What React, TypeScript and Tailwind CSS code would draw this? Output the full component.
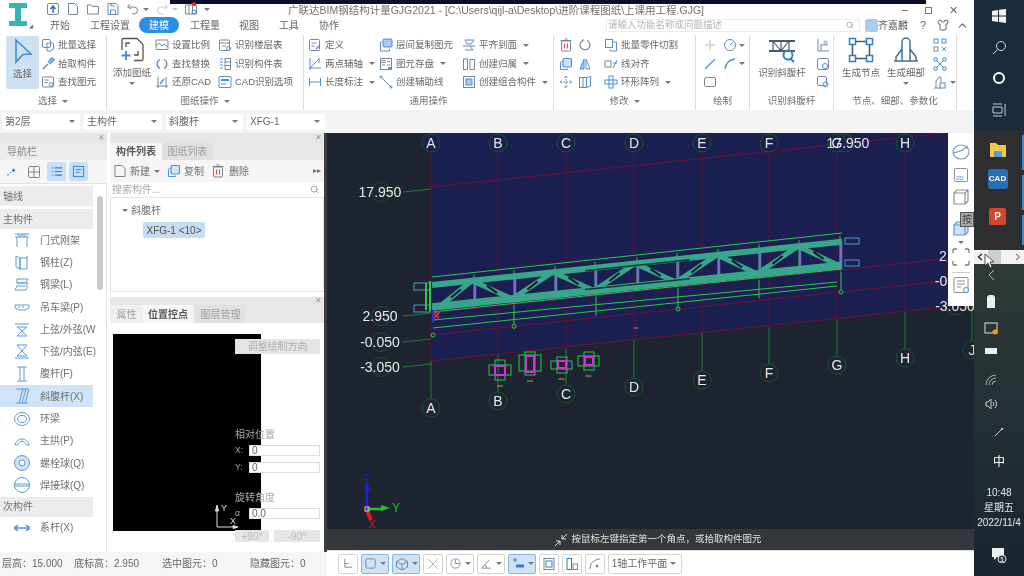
import type { ReactNode } from "react";
import { ChevronUp, Search, Shirt } from "lucide-react";

const G = "#7a8794";
const B = "#4a90d9";

const Caret = ({ className = "" }: { className?: string }) => (
  <span
    className={`inline-block h-0 w-0 border-x-[3px] border-t-[3px] border-x-transparent border-t-[#777] ${className}`}
  />
);

const Svg = ({ size = 14, box = 14, children }: { size?: number; box?: number; children: ReactNode }) => (
  <svg width={size} height={size} viewBox={`0 0 ${box} ${box}`} fill="none" stroke={G} strokeWidth="1" className="shrink-0">
    {children}
  </svg>
);

// small ribbon glyphs
const icons: Record<string, ReactNode> = {
  batch: (
    <>
      <rect x="1.5" y="1.5" width="8" height="8" rx="1.5" />
      <path d="M6 5h5.5a1 1 0 0 1 1 1v5l-3 2H6z" stroke={B} />
    </>
  ),
  pick: (
    <>
      <path d="M2 12l5-5" stroke={G} strokeWidth="1.5" />
      <path d="M7 4l3 3M9 3l2-2 2 2-2 2z" stroke={B} strokeWidth="1.5" />
    </>
  ),
  find: (
    <>
      <rect x="1.5" y="2" width="11" height="10" rx="1" />
      <path d="M3.5 5h4M3.5 7.5h3" />
      <circle cx="10" cy="9.5" r="1.8" stroke={B} />
    </>
  ),
  scale: (
    <>
      <rect x="1" y="2" width="12" height="9.5" rx="1" />
      <path d="M1 8l3-3 3 3 2-2 4 3" stroke={B} />
    </>
  ),
  replace: (
    <>
      <path d="M5 2.5a5 5 0 0 0 0 9" stroke={B} strokeWidth="1.3" />
      <path d="M9 2.5a5 5 0 0 1 0 9" stroke={G} strokeWidth="1.3" />
    </>
  ),
  restore: (
    <>
      <path d="M1 11h12M3 2v11M11 2v11" />
      <path d="M5 9l4-5" stroke={B} strokeWidth="1.5" />
    </>
  ),
  floor: (
    <>
      <rect x="1.5" y="2" width="10" height="10.5" rx="1" />
      <path d="M1.5 5h10M4 8h4" />
      <circle cx="10.5" cy="10.5" r="2" stroke={B} />
    </>
  ),
  table: (
    <>
      <path d="M2 2h3M2 5h3M2 8h3M2 11h3" stroke={B} />
      <rect x="7" y="1.5" width="5.5" height="11" />
      <path d="M7 5h5.5M7 8.5h5.5" />
    </>
  ),
  cad: (
    <>
      <rect x="1" y="1.5" width="12" height="11" rx="1" stroke={B} />
      <path d="M3 5h8" stroke={B} strokeWidth="2" />
      <path d="M3 9h5" />
    </>
  ),
  define: (
    <>
      <rect x="1.5" y="1.5" width="10" height="11" rx="1" />
      <path d="M3.5 5h5M3.5 8h3" />
      <path d="M8 11l4-4" stroke={B} strokeWidth="1.4" />
    </>
  ),
  twoPoint: (
    <>
      <path d="M2 1v12M1 11h12M2 11l9-9" stroke={B} />
      <path d="M11 1v5" />
    </>
  ),
  length: <path d="M1.5 3v8M12.5 3v8M1.5 7h11" stroke={B} />,
  copyFloor: (
    <>
      <rect x="4" y="1" width="9" height="8" rx="1" fill="#a9c9ee" stroke={B} />
      <path d="M3 4H1.5v9h9v-2" />
    </>
  ),
  save: (
    <>
      <rect x="1.5" y="1.5" width="11" height="11" />
      <rect x="3" y="3.5" width="3" height="2" />
      <path d="M8 4.5h3M3 8h3M8 8h3" />
      <path d="M9 11h3" stroke={B} strokeWidth="2" />
    </>
  ),
  guide: (
    <>
      <path d="M2 2l10 10" />
      <circle cx="2" cy="2" r="1" stroke={B} />
      <circle cx="12" cy="12" r="1" stroke={B} />
    </>
  ),
  level: (
    <>
      <path d="M3 2h9L9 6H5z" stroke={B} />
      <path d="M1 8h12M3 12h8l-3-4" />
    </>
  ),
  owner: (
    <>
      <rect x="1.5" y="2" width="4" height="10.5" stroke={B} />
      <path d="M8 2.5h4.5V12.5H8z" />
    </>
  ),
  group: (
    <>
      <rect x="1.5" y="1.5" width="11" height="11" />
      <rect x="4" y="4" width="6" height="6" stroke={B} fill="#a9c9ee" />
    </>
  ),
  trash: (
    <>
      <rect x="2.5" y="3" width="9" height="10" rx="1" />
      <path d="M1.5 2.5h11M5.5 1h3" />
      <path d="M5.5 5.5v5M8.5 5.5v5" stroke="#d9534f" strokeWidth="1.2" />
    </>
  ),
  rotate: <path d="M9 2.2A5 5 0 1 1 5 2.2M5 1v2.5" strokeWidth="1.2" />,
  copy: (
    <>
      <rect x="4" y="1.5" width="8.5" height="8.5" rx="1.5" stroke={B} strokeWidth="1.2" fill="#cfe2f7" />
      <path d="M3.5 4.5H2.5a1 1 0 0 0-1 1v7h7v-1" stroke={B} />
    </>
  ),
  mirror: (
    <>
      <path d="M6 2L2 12h4z" fill="#a9c9ee" stroke={B} />
      <path d="M8 2l4 10H8z" />
    </>
  ),
  move: <path d="M7 1v12M1 7h12M5.5 2.5L7 1l1.5 1.5M5.5 11.5L7 13l1.5-1.5M2.5 5.5L1 7l1.5 1.5M11.5 5.5L13 7l-1.5 1.5" stroke={B} strokeDasharray="2 1" />,
  spin: (
    <>
      <rect x="1.5" y="2.5" width="7" height="10" />
      <path d="M8.5 2.5l4-1V11l-4 1.5M5 2.5V12.5" stroke={B} />
    </>
  ),
  cut: (
    <>
      <rect x="1.5" y="1.5" width="7" height="8" stroke={B} />
      <path d="M9 4h3.5v9H6v-2" />
    </>
  ),
  align: (
    <>
      <rect x="1" y="4" width="6" height="6" />
      <path d="M9 11l4-8M9 6h4" stroke={B} />
    </>
  ),
  ring: (
    <>
      <rect x="5" y="1" width="4" height="4" stroke={B} />
      <rect x="1" y="5" width="4" height="4" stroke={B} />
      <rect x="9" y="5" width="4" height="4" stroke={B} />
      <rect x="5" y="9" width="4" height="4" stroke={B} />
    </>
  ),
  cross: <path d="M7 2v10M2 7h10" stroke="#b8c0c8" />,
  dial: (
    <>
      <circle cx="7" cy="7" r="5.5" />
      <path d="M7 7l3-3" stroke={B} />
    </>
  ),
  line: <path d="M2 12L12 2" stroke={B} strokeWidth="1.3" />,
  arc: <path d="M2 12C3 6 7 2.5 12 2" stroke={B} strokeWidth="1.3" />,
  rect: <rect x="1.5" y="2.5" width="11" height="9" rx="1.5" stroke={G} />,
  mini1: (
    <>
      <path d="M2 1v12M2 13h11M5 6v7M5 7h7" stroke={G} />
      <circle cx="9.5" cy="4.5" r="1.5" stroke={B} />
    </>
  ),
  mini2: (
    <>
      <rect x="1.5" y="1.5" width="11" height="11" rx="1.5" />
      <circle cx="9" cy="9" r="2.5" stroke={B} />
    </>
  ),
  mini3: (
    <>
      <rect x="1.5" y="1.5" width="9" height="9" rx="1.5" />
      <circle cx="9.5" cy="9.5" r="2.5" stroke={B} />
    </>
  ),
  node1: (
    <>
      <rect x="1" y="1" width="4" height="4" stroke={B} />
      <rect x="9" y="1" width="4" height="4" stroke={B} />
      <rect x="1" y="9" width="4" height="4" />
      <path d="M9 9l4 4M9 13l4-4" stroke={B} />
    </>
  ),
  node2: <path d="M1 1h3v3H1zM10 1h3v3h-3zM1 10h3v3H1zM10 10h3v3h-3zM4 4l6 6M10 4l-6 6" stroke={B} />,
  node3: (
    <>
      <path d="M3 13V6l3-4 2 0v5M8 13H1" />
      <rect x="7" y="8" width="5" height="5" stroke={B} />
    </>
  ),
};

const I = ({ n }: { n: string }) => <Svg>{icons[n]}</Svg>;

const Tool = ({ icon, text, caret }: { icon: string; text: string; caret?: boolean }) => (
  <div className="flex h-[18.5px] items-center gap-[3px] whitespace-nowrap">
    <I n={icon} />
    <span>{text}</span>
    {caret && <Caret className="ml-[3px]" />}
  </div>
);

const Col = ({ w, ml = 0, children }: { w: number; ml?: number; children: ReactNode }) => (
  <div className="flex flex-col" style={{ width: w, marginLeft: ml }}>
    {children}
  </div>
);

const Group = ({ w, label, children, noCaret }: { w: number; label: string; children: ReactNode; noCaret?: boolean }) => (
  <div className="flex h-full shrink-0 flex-col border-r border-[#dcdcdc]" style={{ width: w }}>
    <div className="flex h-[59px] pt-px">{children}</div>
    <div className="flex h-[15px] items-center justify-center gap-[5px] text-[#707070]">
      {label}
      {!noCaret && <Caret />}
    </div>
  </div>
);

const BigTool = ({ w, ml, text, caret, children }: { w: number; ml: number; text: string; caret?: boolean; children: ReactNode }) => (
  <div className="flex shrink-0 flex-col items-center" style={{ width: w, marginLeft: ml }}>
    <div className="flex h-[28px] items-center justify-center">{children}</div>
    <span className="mt-[2px] whitespace-nowrap">{text}</span>
    {caret && <Caret className="mt-[2px]" />}
  </div>
);

const Ribbon = () => (
  <div className="flex h-[77px] shrink-0 bg-white pt-[2px] text-[9.5px] text-[#666]">
    <Group w={107} label="选择">
      <div className="ml-[6px] flex h-[53px] w-[33px] flex-col items-center rounded-[2px] bg-[#cfe0f2] pt-px">
        <svg width="24" height="28" viewBox="0 0 24 28" fill="none" stroke="#3f87d0" strokeWidth="1.5">
          <path d="M5 3l15 14-8 .5L5 25z" />
        </svg>
        <span className="mt-[2px]">选择</span>
      </div>
      <Col w={60} ml={2}>
        <Tool icon="batch" text="批量选择" />
        <Tool icon="pick" text="拾取构件" />
        <Tool icon="find" text="查找图元" />
      </Col>
    </Group>
    <Group w={197} label="图纸操作">
      <BigTool w={42} ml={4} text="添加图纸" caret>
        <svg width="26" height="26" viewBox="0 0 26 26" fill="none" stroke="#555" strokeWidth="1.3">
          <path d="M3 13V3a1.5 1.5 0 0 1 1.5-1.5H18l6 6V22a1.5 1.5 0 0 1-1.5 1.5H15" />
          <path d="M7 10V6h4M19 14v4h-4" />
          <path d="M7 14v9M2.5 18.5h9" stroke="#3f87d0" strokeWidth="1.8" />
        </svg>
      </BigTool>
      <Col w={63} ml={2}>
        <Tool icon="scale" text="设置比例" />
        <Tool icon="replace" text="查找替换" />
        <Tool icon="restore" text="还原CAD" />
      </Col>
      <Col w={80}>
        <Tool icon="floor" text="识别楼层表" />
        <Tool icon="table" text="识别构件表" />
        <Tool icon="cad" text="CAD识别选项" />
      </Col>
    </Group>
    <Group w={250} label="通用操作" noCaret>
      <Col w={71} ml={4}>
        <Tool icon="define" text="定义" />
        <Tool icon="twoPoint" text="两点辅轴" caret />
        <Tool icon="length" text="长度标注" caret />
      </Col>
      <Col w={83}>
        <Tool icon="copyFloor" text="层间复制图元" />
        <Tool icon="save" text="图元存盘" caret />
        <Tool icon="guide" text="创建辅助线" />
      </Col>
      <Col w={88}>
        <Tool icon="level" text="平齐到面" caret />
        <Tool icon="owner" text="创建归属" caret />
        <Tool icon="group" text="创建组合构件" caret />
      </Col>
    </Group>
    <Group w={142} label="修改">
      <Col w={44} ml={5}>
        <div className="flex h-[18.5px] items-center gap-[5px]">
          <I n="trash" />
          <I n="rotate" />
        </div>
        <div className="flex h-[18.5px] items-center gap-[5px]">
          <I n="copy" />
          <I n="mirror" />
        </div>
        <div className="flex h-[18.5px] items-center gap-[5px]">
          <I n="move" />
          <I n="spin" />
        </div>
      </Col>
      <Col w={85} ml={1}>
        <Tool icon="cut" text="批量零件切割" />
        <Tool icon="align" text="线对齐" />
        <Tool icon="ring" text="环形阵列" caret />
      </Col>
    </Group>
    <Group w={54} label="绘制" noCaret>
      <div className="ml-[7px] flex flex-col">
        <div className="flex h-[18.5px] items-center gap-[6px]">
          <I n="cross" />
          <I n="dial" />
          <Caret className="-ml-[4px]" />
        </div>
        <div className="flex h-[18.5px] items-center gap-[6px]">
          <I n="line" />
          <I n="arc" />
          <Caret className="-ml-[4px]" />
        </div>
        <div className="flex h-[18.5px] items-center">
          <I n="rect" />
        </div>
      </div>
    </Group>
    <Group w={84} label="识别斜腹杆" noCaret>
      <BigTool w={56} ml={4} text="识别斜腹杆">
        <svg width="28" height="26" viewBox="0 0 28 26" fill="none" stroke="#4b5a6a" strokeWidth="1.2">
          <path d="M1 4h26M1 14h26" strokeWidth="1.8" />
          <path d="M5 4v10M13 4v10M21 4v10M5 4l8 10M13 14l8-10" />
          <circle cx="20" cy="18" r="4.5" stroke="#2f7fd0" strokeWidth="2" />
          <path d="M23 22l3 3" stroke="#2f7fd0" strokeWidth="2" />
        </svg>
      </BigTool>
      <Col w={16} ml={6}>
        <div className="flex h-[18.5px] items-center"><I n="mini1" /></div>
        <div className="flex h-[18.5px] items-center"><I n="mini2" /></div>
        <div className="flex h-[18.5px] items-center"><I n="mini3" /></div>
      </Col>
    </Group>
    <Group w={123} label="节点、细部、参数化" noCaret>
      <BigTool w={42} ml={6} text="生成节点">
        <svg width="26" height="26" viewBox="0 0 26 26" fill="none" stroke="#2f7fd0" strokeWidth="1.5">
          <rect x="1.5" y="1.5" width="6" height="6" />
          <rect x="18.5" y="1.5" width="6" height="6" />
          <rect x="1.5" y="18.5" width="6" height="6" />
          <rect x="18.5" y="18.5" width="6" height="6" />
          <path d="M7.5 4.5h11M7.5 21.5h11M4.5 7.5v11M21.5 7.5v11" stroke="#4b5a6a" />
        </svg>
      </BigTool>
      <BigTool w={44} ml={2} text="生成细部" caret>
        <svg width="26" height="26" viewBox="0 0 26 26" fill="none" stroke="#3f6f9f" strokeWidth="1.5">
          <path d="M9 24V5a4 4 0 0 1 8 0v19M1 24h24M9 12l-6 8v4M17 12l6 8v4" />
        </svg>
      </BigTool>
      <Col w={22} ml={5}>
        <div className="flex h-[18.5px] items-center"><I n="node1" /></div>
        <div className="flex h-[18.5px] items-center"><I n="node2" /></div>
        <div className="flex h-[18.5px] items-center gap-[3px]">
          <I n="node3" />
          <Caret />
        </div>
      </Col>
    </Group>
  </div>
);

const QuickBar = () => (
  <div className="flex shrink-0 items-center gap-[6px]">
    <Svg>
      <rect x="1.5" y="1.5" width="11" height="11" rx="1.5" />
      <path d="M7 11V5M4.5 7L7 4l2.500 3" stroke="#2f6fc0" strokeWidth="1.5" />
    </Svg>
    <Svg>
      <path d="M2.5 1.5h6l3 3v8h-9z" />
    </Svg>
    <Svg>
      <path d="M1.5 12V3h4l1 1.5h6V12z" />
    </Svg>
    <Svg>
      <path d="M2 1.5h8l2 2v9H2z" />
      <path d="M4.5 12V8h5v4M5 1.5V4h4" stroke={B} />
    </Svg>
    <div className="flex items-center gap-[3px]">
      <Svg>
        <path d="M4 2L1.500 5 5 7M2 5h6a3.500 3.500 0 0 1 0 7H6" />
      </Svg>
      <Caret />
    </div>
    <div className="flex items-center gap-[3px] opacity-40">
      <Svg>
        <path d="M10 2l2.500 3L9 7M12 5H6a3.500 3.500 0 0 0 0 7h2" />
      </Svg>
      <Caret />
    </div>
    <div className="relative">
      <Svg>
        <path d="M1.5 3h11v9h-11zM5 3v9M8.500 3v9" />
        <circle cx="10" cy="10" r="2" stroke={B} />
      </Svg>
      <span className="absolute top-0 right-[2px] size-[4px] rounded-full bg-[#e02020]" />
    </div>
    <Caret />
  </div>
);

const Header = () => (
  <div className="relative h-[33px] shrink-0 bg-white text-[#666]">
    <div className="absolute top-0 left-[170px] h-[4px] w-[756px] bg-[#0b0d2c]" />
    <div className="flex h-[33px]">
      <div className="relative w-[46px] shrink-0">
        <svg width="24" height="24" viewBox="0 0 24 24" className="mt-[2px] ml-[6px]">
          <path d="M3 1h18v5h-6v13h6v5H3v-5h6V6H3z" fill="#36b5b5" />
        </svg>
        <Caret className="absolute right-[11px] bottom-[4px] rotate-[-45deg]" />
      </div>
      <div className="flex flex-1 flex-col">
        <div className="flex h-[17px] items-center pt-px">
          <QuickBar />
          <span className="ml-[78px] w-[612px] shrink-0 truncate pt-[3px] text-[10.5px] text-[#707070]">
            广联达BIM钢结构计量GJG2021 - [C:\Users\qijl-a\Desktop\进阶课程图纸\上课用工程.GJG]
          </span>
          <div className="flex w-[66px] shrink-0 items-center justify-between pt-[2px] pl-[2px] pr-[8px] text-[#666]">
            <span className="h-px w-[6px] bg-[#777]" />
            <span className="size-[7px] border border-[#777]" />
            <span className="text-[11px] leading-none">✕</span>
          </div>
        </div>
        <div className="flex h-[16px] items-center text-[10px]">
          <span className="ml-[4px] w-[40px]">开始</span>
          <span className="w-[49px]">工程设置</span>
          <span className="flex h-[16px] w-[40px] items-center justify-center rounded-full bg-[#2a8fe8] text-white">建模</span>
          <span className="ml-[11px] w-[49px]">工程量</span>
          <span className="w-[40px]">视图</span>
          <span className="w-[40px]">工具</span>
          <span className="w-[287px]">协作</span>
          <div className="flex h-[13px] w-[254px] items-center justify-between border border-[#ececec] pr-[5px] pl-px text-[9.5px] text-[#b5b5b5]">
            请输入功能名称或问题描述
            <Search size={8} color="#888" />
          </div>
          <div className="ml-[5px] size-[13px] rounded-[2px] bg-[#a9cdf2]" />
          <span className="w-[42px] text-[#555]">齐嘉麟</span>
          <span className="w-[17px] text-[11px]">?</span>
          <Shirt size={12} color="#666" />
          <ChevronUp size={13} color="#666" className="ml-[7px]" />
        </div>
      </div>
    </div>
  </div>
);

const Combo = ({ w, text }: { w: number; text: string }) => (
  <div className="flex h-[16px] items-center justify-between rounded-[2px] bg-white pr-[5px] pl-[3px] text-[#666]" style={{ width: w }}>
    {text}
    <Caret />
  </div>
);

const navIcons: Record<string, ReactNode> = {
  frame: <path d="M2 3h14M2 6h14M4 6v10M14 6v10M5 3l2 3 2-3 2 3 2-3" />,
  column: <path d="M3 3l4 2v11l-4-2zM7 5h7v11H7zM14 3v2" />,
  beam: <path d="M4 3h11l-2 4H4zM4 7h11l-2 3H4l-2 4h11l2-4" />,
  crane: <path d="M2 7h14v3l-4 2H6L2 10zM5 9h2M9 9h2" />,
  top: <path d="M2 4h14M4 7h10L9 11l5 5H4l5-5z" />,
  bottom: <path d="M4 2h10L9 8l5 5H4l5-5zM2 15h14" />,
  web: <path d="M4 2h10M4 16h10M7 2v14M11 2v14" />,
  slant: <path d="M3 2h12M3 16h12M6 16L10 2M9 16l4-14M12 16l4-14" />,
  ring: (
    <>
      <ellipse cx="9" cy="9" rx="7.5" ry="6.5" />
      <ellipse cx="9" cy="9" rx="4.5" ry="3.5" />
    </>
  ),
  arch: <path d="M2 13c2-8 12-8 14 0h-2.5c-2-5-7-5-9 0z" />,
  bolt: (
    <>
      <circle cx="9" cy="9" r="7.5" fill="#cfe2f7" />
      <circle cx="9" cy="9" r="3" fill="#fff" />
    </>
  ),
  weld: (
    <>
      <circle cx="9" cy="9" r="7.5" />
      <path d="M1.5 8h15M1.5 10h15" />
    </>
  ),
  tie: <path d="M2 9h14M2 7v4M16 7v4M5 6l-3 3 3 3M13 6l3 3-3 3" strokeWidth="1.5" />,
};

const navItems: [string, string][] = [
  ["frame", "门式刚架"],
  ["column", "钢柱(Z)"],
  ["beam", "钢梁(L)"],
  ["crane", "吊车梁(P)"],
  ["top", "上弦/外弦(W"],
  ["bottom", "下弦/内弦(E)"],
  ["web", "腹杆(F)"],
  ["slant", "斜腹杆(X)"],
  ["ring", "环梁"],
  ["arch", "主拱(P)"],
  ["bolt", "螺栓球(Q)"],
  ["weld", "焊接球(Q)"],
];

const NavRow = ({ icon, text, active }: { icon: string; text: string; active?: boolean }) => (
  <div className={`flex h-[22.3px] shrink-0 items-center pl-[13px] ${active ? "bg-[#cfe4f8]" : ""}`}>
    <svg width="18" height="18" viewBox="0 0 18 18" fill="none" stroke="#5b9bd5" strokeWidth="1" className="shrink-0">
      {navIcons[icon]}
    </svg>
    <span className="ml-[9px] whitespace-nowrap">{text}</span>
  </div>
);

const SectionRow = ({ text }: { text: string }) => (
  <div className="flex h-[20px] shrink-0 items-center bg-[#ececec] pl-[3px]">{text}</div>
);

const CloseStrip = ({ h = 10 }: { h?: number }) => (
  <div className="flex shrink-0 items-center justify-end bg-[#e6e6e6] pr-[2px] text-[8px] leading-none text-[#999]" style={{ height: h }}>
    ✕
  </div>
);

const NavPanel = () => (
  <div className="flex h-full w-[107px] shrink-0 flex-col overflow-hidden bg-[#f5f5f5] text-[10px] text-[#707070]">
    <CloseStrip />
    <div className="flex h-[17px] shrink-0 items-center bg-[#ececec] pl-[7px] text-[#888]">导航栏</div>
    <div className="flex h-[23px] shrink-0 items-center pl-[5px]">
      <Svg size={12}>
        <path d="M3 11l1-1M6 8l1-1M10 3v4M8 5h4" stroke="#2f7fd0" strokeWidth="1.5" />
      </Svg>
      <span className="ml-[10px]">
        <Svg size={14}>
          <rect x="1.5" y="1.5" width="11" height="11" rx="1" />
          <path d="M7 1.5v11M1.5 7h11" />
        </Svg>
      </span>
      <div className="ml-[6px] flex size-[19px] items-center justify-center rounded-[2px] bg-[#c7dff6]">
        <Svg size={13}>
          <path d="M2 3h1M5 3h8M2 7h1M5 7h8M2 11h1M5 11h8" stroke="#2f7fd0" strokeWidth="1.3" />
        </Svg>
      </div>
      <div className="ml-[3px] flex size-[19px] items-center justify-center rounded-[2px] bg-[#c7dff6]">
        <Svg size={13}>
          <rect x="1.5" y="1.5" width="11" height="11" stroke="#2f7fd0" />
          <path d="M4 5h6M4 8h4" stroke="#2f7fd0" />
        </Svg>
      </div>
    </div>
    <div className="relative flex flex-1 flex-col overflow-hidden border-r border-t border-[#e2e2e2] bg-white pr-[13px] pt-[2px]">
      <SectionRow text="轴线" />
      <div className="h-[3px] shrink-0" />
      <SectionRow text="主构件" />
      {navItems.map(([icon, text]) => (
        <NavRow key={text} icon={icon} text={text} active={icon === "slant"} />
      ))}
      <SectionRow text="次构件" />
      <NavRow icon="tie" text="系杆(X)" />
      <div className="absolute top-[12px] right-[3px] h-[94px] w-[6px] rounded-full bg-[#c9c9c9]" />
    </div>
  </div>
);

const MemberPanel = () => (
  <div className="flex h-[159px] shrink-0 flex-col bg-[#f5f5f5] text-[10px] text-[#707070]">
    <CloseStrip />
    <div className="flex h-[17px] shrink-0 bg-[#e8e8e8]">
      <span className="flex w-[52px] items-center justify-center bg-[#f7f7f7] font-bold text-[#555]">构件列表</span>
      <span className="flex w-[51px] items-center justify-center bg-[#e0e0e0] text-[#a0a0a0]">图纸列表</span>
    </div>
    <div className="flex h-[22px] shrink-0 items-center pl-[3px]">
      <Svg size={14}>
        <path d="M2 1.5h7l3 3v8H2z" />
      </Svg>
      <span className="ml-[3px] w-[24px]">新建</span>
      <Caret className="mr-[7px]" />
      <I n="copy" />
      <span className="ml-[3px] w-[27px]">复制</span>
      <I n="trash" />
      <span className="ml-[4px] flex-1">删除</span>
      <span className="pr-[3px] text-[8px]">▸▸</span>
    </div>
    <div className="flex h-[15px] shrink-0 items-center justify-between bg-white pr-[5px] pl-[2px] text-[#aaa]">
      搜索构件...
      <Search size={9} color="#888" />
    </div>
    <div className="flex-1 border border-[#e4e4e4] bg-white pt-[4px] pl-[11px]">
      <div className="flex h-[16px] items-center gap-[3px]">
        <Caret />
        斜腹杆
      </div>
      <div className="mt-[4px] ml-[21px] flex h-[16px] w-[62px] items-center justify-center rounded-[2px] bg-[#c5dcf2] text-[#555]">
        XFG-1 &lt;10&gt;
      </div>
    </div>
  </div>
);

const Field = ({ label, value }: { label: string; value: string }) => (
  <div className="flex h-[11px] items-center">
    <span className="w-[14px] text-[8.5px] text-[#aaa]">{label}</span>
    <div className="flex h-[11px] w-[71px] items-center border border-[#ddd] bg-white pl-[2px] text-[#666]">{value}</div>
  </div>
);

const PositionPanel = () => (
  <div className="mt-[5px] flex flex-1 flex-col bg-white text-[10px] text-[#707070]">
    <CloseStrip h={8} />
    <div className="flex h-[18px] shrink-0 bg-[#e8e8e8]">
      <span className="flex w-[33px] items-center justify-center bg-[#efefef] text-[#a0a0a0]">属性</span>
      <span className="flex w-[50px] items-center justify-center bg-[#f7f7f7] font-bold whitespace-nowrap text-[#555]">位置控点</span>
      <span className="ml-[2px] flex w-[51px] items-center justify-center bg-[#e0e0e0] text-[#a0a0a0]">图层管理</span>
    </div>
    <div className="relative flex-1">
      <div className="mt-[11px] ml-[3px] h-[197px] w-[148px] bg-black" />
      <div className="absolute top-[16px] left-[125px] flex h-[15px] w-[85px] items-center justify-center bg-[#e4e4e4] text-[#b0b0b0]">
        调整绘制方向
      </div>
      <div className="absolute top-[104px] left-[125px] flex w-[85px] flex-col">
        <span className="text-[#aaa]">相对位置</span>
        <div className="mt-[3px] flex flex-col gap-[6px]">
          <Field label="X:" value="0" />
          <Field label="Y:" value="0" />
        </div>
        <span className="mt-[17px] text-[#aaa]">旋转角度</span>
        <div className="mt-[3px]">
          <Field label="α" value="0.0" />
        </div>
        <div className="mt-[11px] flex justify-between text-[#bbb]">
          <span className="flex h-[12px] w-[34px] items-center justify-center bg-[#e6e6e6]">+90°</span>
          <span className="flex h-[12px] w-[46px] items-center justify-center bg-[#e6e6e6]">-90°</span>
        </div>
      </div>
      <svg width="30" height="30" viewBox="0 0 30 30" fill="none" stroke="#ddd" className="absolute top-[179px] left-[103px]">
        <path d="M4 4v21h20" />
        <path d="M4 3L2.500 9h3zM25 25l-5-1.500v3z" fill="#ddd" />
        <text x="8" y="9" fontSize="9" fill="#ddd" stroke="none">Y</text>
        <text x="17" y="22" fontSize="9" fill="#ddd" stroke="none">X</text>
      </svg>
    </div>
  </div>
);

const StatusBar = () => (
  <div className="flex h-[24px] w-[330px] shrink-0 items-center bg-[#f6f6f6] pb-px pl-[2px] text-[10px] whitespace-nowrap text-[#666]">
    <span className="w-[72px]">层高：15.000</span>
    <span className="w-[88px]">底标高：2.950</span>
    <span className="w-[88px]">选中图元：0</span>
    <span>隐藏图元：0</span>
  </div>
);

// --- CAD scene, in page coordinates ---
const gridTop: [string, number][] = [
  ["A", 431],
  ["B", 498],
  ["C", 566],
  ["D", 634],
  ["E", 702],
  ["F", 769],
  ["G", 837],
  ["H", 905],
];
const gridBottom: [string, number, number, number][] = [
  ["A", 431, 408, 361],
  ["B", 498, 401, 354],
  ["C", 566, 394, 349],
  ["D", 634, 387, 340],
  ["E", 702, 380, 333],
  ["F", 769, 373, 327],
  ["G", 837, 365, 320],
  ["H", 905, 358, 312],
  ["J", 972, 350, 305],
];
const elev = (y0: number, x: number) => y0 - 0.105 * (x - 431);
const topChord = (x: number) => 285 - 0.1057 * (x - 432);
const botChord = (x: number) => 307 - 0.102 * (x - 432);
const topNodes = [472, 553, 635, 717, 798];
const botNodes = [440, 512, 594, 676, 757, 839];
const posts = [474, 514, 555, 595, 637, 677, 718, 759, 799, 840];
const levels: [string, number][] = [
  ["17.950", 192],
  ["2.950", 316],
  ["-0.050", 342],
  ["-3.050", 367],
];
// horizontal box, vertical box, inner section: x1,y1,x2,y2
const columns: number[][] = [
  [489, 365, 511, 375, 495, 360, 505, 380, 495, 366, 505, 375],
  [519, 355, 541, 371, 525, 352, 535, 375, 526, 356, 534, 372],
  [551, 361, 572, 369, 557, 357, 567, 373, 558, 361, 566, 368],
  [578, 356, 599, 366, 584, 352, 594, 370, 585, 357, 593, 365],
];

const Label = ({ x, y, t }: { x: number; y: number; t: string }) => (
  <text x={x} y={y + 5} textAnchor="middle" fontSize="14" fill="#e8e8e8" fontFamily="'Liberation Sans', sans-serif">
    {t}
  </text>
);

const Box = ({ c, i, stroke, w = 1 }: { c: number[]; i: number; stroke: string; w?: number }) => (
  <rect x={c[i]} y={c[i + 1]} width={c[i + 2] - c[i]} height={c[i + 3] - c[i + 1]} fill="none" stroke={stroke} strokeWidth={w} />
);

const Scene = () => (
  <svg viewBox="327 133 647 396" width="647" height="396" className="absolute inset-0">
    <polygon points={`431,133 950,133 950,${elev(361, 950)} 431,361`} fill="#1b2050" />
    {[187, 313, 335, 361].map((y0) => (
      <line key={y0} x1="431" y1={elev(y0, 431)} x2="950" y2={elev(y0, 950)} stroke="#6a1238" strokeWidth="1" />
    ))}
    {gridTop.map(([t, x], i) => (
      <line key={t} x1={x} y1="152" x2={x} y2={gridBottom[i][3]} stroke="#5a1238" strokeWidth="1" />
    ))}
    {gridBottom.slice(0, 9).map(([t, x, y, y0]) => (
      <line key={t} x1={x} y1={y0 + (t === "B" || t === "C" ? 0 : 0)} x2={x} y2={y - 9} stroke="#1f7a35" strokeWidth="1" />
    ))}
    {levels.map(([t, y]) => (
      <g key={t}>
        <circle cx="381" cy={y} r="9.5" fill="none" stroke="#15562a" />
        <line x1="403" y1={y} x2="431" y2={y - 3} stroke="#1f7a35" />
        <Label x={380} y={y} t={t} />
      </g>
    ))}
    <circle cx="845" cy="143" r="9" fill="none" stroke="#15562a" />
    {gridTop.map(([t, x]) => (
      <g key={t}>
        <circle cx={x} cy="143" r="9" fill="#1b2050" stroke="#15562a" />
        <Label x={x} y={143} t={t} />
      </g>
    ))}
    <Label x={848} y={143} t="17.950" />
    {gridBottom.map(([t, x, y]) => (
      <g key={t}>
        <circle cx={x} cy={y} r="9" fill="#1e2530" stroke="#15562a" />
        <Label x={x} y={y} t={t} />
      </g>
    ))}
    <Label x={943} y={256} t="2" />
    <Label x={941} y={281} t="-0" />
    <circle cx="955" cy="306" r="9" fill="none" stroke="#15562a" />
    <Label x={955} y={306} t="-3.050" />

    {/* thin edges of the truss */}
    <line x1="432" y1="277" x2="842" y2="233" stroke="#2fc44f" />
    <line x1="432" y1="312" x2="842" y2="269" stroke="#2fc44f" />
    <line x1="433" y1="320" x2="837" y2="282" stroke="#2fc44f" />
    <line x1="433" y1="328" x2="837" y2="286" stroke="#2fc44f" />
    {posts.map((x) => (
      <g key={x}>
        <line x1={x} y1={topChord(x) - 6} x2={x} y2={botChord(x) + 5} stroke="#2fc44f" />
        <line x1={x + 1} y1={topChord(x)} x2={x + 1} y2={botChord(x)} stroke="#6f72c8" strokeWidth="2.5" />
      </g>
    ))}
    {botNodes.slice(1).map((x, i) => (
      <g key={x}>
        <line x1={x + 2} y1={botChord(x) + 6} x2={x + 2} y2={elev(335, x + 2) - 2} stroke="#2fc44f" />
        {i % 2 === 0 && <circle cx={x + 2} cy={elev(335, x + 2)} r="2" fill="none" stroke="#2fc44f" />}
      </g>
    ))}
    <circle cx="433" cy="335" r="2" fill="none" stroke="#2fc44f" />
    {/* diagonals */}
    {topNodes.map((x, i) => (
      <g key={x}>
        <line x1={botNodes[i]} y1={botChord(botNodes[i])} x2={x} y2={topChord(x)} stroke="#38a68a" strokeWidth="5" />
        <line x1={x} y1={topChord(x)} x2={botNodes[i + 1]} y2={botChord(botNodes[i + 1])} stroke="#38a68a" strokeWidth="5" />
        <line x1={(botNodes[i] + x) / 2 - 5} y1={(botChord(botNodes[i]) + topChord(x)) / 2 + 4} x2={(botNodes[i] + x) / 2 + 5} y2={(botChord(botNodes[i]) + topChord(x)) / 2 - 4} stroke="#0b1a20" strokeWidth="2" />
        <line x1={(x + botNodes[i + 1]) / 2 - 5} y1={(topChord(x) + botChord(botNodes[i + 1])) / 2 - 4} x2={(x + botNodes[i + 1]) / 2 + 5} y2={(topChord(x) + botChord(botNodes[i + 1])) / 2 + 3} stroke="#0b1a20" strokeWidth="2" />
      </g>
    ))}
    {/* chords */}
    <line x1="432" y1={topChord(432)} x2="842" y2={topChord(842)} stroke="#38a68a" strokeWidth="6" />
    <line x1="432" y1={botChord(432)} x2="842" y2={botChord(842)} stroke="#38a68a" strokeWidth="7.5" />
    <line x1="585" y1={botChord(585) - 2} x2="690" y2={botChord(690) - 2} stroke="#123a30" strokeWidth="1.5" />
    <line x1="585" y1={topChord(585) + 2} x2="690" y2={topChord(690) + 2} stroke="#123a30" strokeWidth="1.5" />
    {/* end plates */}
    {[[414, 283], [414, 305]].map(([x, y]) => (
      <g key={y} fill="none" stroke="#3f9fd8">
        <rect x={x} y={y} width="16" height="7" />
        <rect x={x + 431} y={y - 45} width="14" height="6" />
      </g>
    ))}
    <path d="M426 283v27M430 281v30" stroke="#2fc44f" strokeWidth="2" />
    <path d="M432 312h8M434 318l5-5M439 318l-5-5" stroke="#e33a3a" strokeWidth="1.5" />
    <path d="M433 310v12" stroke="#2233dd" strokeWidth="2" />
    {/* columns under the truss */}
    {columns.map((c) => (
      <g key={c[0]}>
        <Box c={c} i={0} stroke="#2fc44f" />
        <Box c={c} i={4} stroke="#2fc44f" />
        <Box c={c} i={8} stroke="#d52fd5" w={2} />
        <line x1={(c[0] + c[2]) / 2 - 3} y1={c[7] + 6} x2={(c[0] + c[2]) / 2 + 3} y2={c[7] + 6} stroke="#b8a83a" />
      </g>
    ))}
    <line x1="634" y1="328" x2="638" y2="328" stroke="#b8a83a" />
    {/* view axes */}
    <path d="M367 509v-22" stroke="#1c20e0" strokeWidth="2.5" />
    <path d="M364 490l3-9 3 9z" fill="#1c20e0" />
    <text x="364" y="480" fontSize="9" fill="#1c20e0">Z</text>
    <path d="M367 509h16" stroke="#22c422" strokeWidth="2.5" />
    <path d="M381 505l9 3-9 3z" fill="#22c422" />
    <text x="392" y="512" fontSize="12" fill="#22c422" fontFamily="'Liberation Sans', sans-serif">Y</text>
    <path d="M367 510l4 10" stroke="#e01c1c" strokeWidth="4" />
    <text x="369" y="528" fontSize="10" fill="#e01c1c" fontFamily="'Liberation Sans', sans-serif">X</text>
    <rect x="365" y="507" width="4" height="4" fill="none" stroke="#ccc" />
  </svg>
);

const ViewBar = () => (
  <div className="absolute top-0 right-0 flex h-[173px] w-[26px] flex-col items-center bg-white pt-[10px]">
    <svg width="20" height="18" viewBox="0 0 20 18" fill="none" stroke="#7f9fc4" strokeWidth="1.2">
      <ellipse cx="10" cy="9" rx="8" ry="7" />
      <path d="M2 10c5-1 12-4 15-7" />
    </svg>
    <svg width="20" height="20" viewBox="0 0 20 20" fill="none" stroke="#8a8f96" className="mt-[4px]">
      <rect x="3.5" y="3.5" width="13" height="13" rx="1" />
      <text x="5" y="15" fontSize="6" fill="#4a90d9" stroke="none" fontFamily="'Liberation Sans', sans-serif">2D</text>
    </svg>
    <svg width="20" height="20" viewBox="0 0 20 20" fill="none" stroke="#8a8f96" strokeWidth="1.2" className="mt-[2px]">
      <path d="M3 6h11v11H3zM3 6l3-3h11v11l-3 3M14 6l3-3" />
    </svg>
    <svg width="20" height="20" viewBox="0 0 20 20" fill="#cfe2f7" stroke="#5b9bd5" strokeWidth="1.2" className="mt-[11px]">
      <path d="M3 7h11v10H3zM3 7l3-3h11v10l-3 3M14 7l3-3" />
    </svg>
    <Caret className="mt-[3px]" />
    <svg width="20" height="20" viewBox="0 0 20 20" fill="none" stroke="#777" strokeWidth="1.3" className="mt-[3px]">
      <path d="M2 6V3a1 1 0 0 1 1-1h3M14 2h3a1 1 0 0 1 1 1v3M18 14v3a1 1 0 0 1-1 1h-3M6 18H3a1 1 0 0 1-1-1v-3" />
    </svg>
    <div className="mt-[5px] h-px w-[18px] bg-[#ccc]" />
    <svg width="20" height="20" viewBox="0 0 20 20" fill="none" stroke="#8a8f96" className="mt-[2px]">
      <rect x="3" y="2.5" width="14" height="15" rx="1" />
      <path d="M6 6h8M6 9h8M6 12h4" />
      <circle cx="15" cy="15" r="2.5" stroke="#4a90d9" fill="#fff" />
    </svg>
  </div>
);

const Btn = ({ w, on, caret, children }: { w: number; on?: boolean; caret?: boolean; children: ReactNode }) => (
  <div
    className={`flex h-[20px] shrink-0 items-center justify-center gap-[3px] rounded-[2px] border ${on ? "border-[#86b5e3] bg-[#cfe2f7]" : "border-[#d5d5d5] bg-white"}`}
    style={{ width: w }}
  >
    {children}
    {caret && <Caret />}
  </div>
);

const BottomBar = () => (
  <div className="flex h-[26px] shrink-0 items-center gap-[3px] border-t border-[#ddd] bg-white pl-[11px] text-[10px] text-[#666]">
    <Btn w={20}>
      <Svg size={13}>
        <path d="M3 2v9h8M3 7h4" />
      </Svg>
    </Btn>
    <Btn w={28} on caret>
      <Svg size={13}>
        <rect x="2" y="2" width="10" height="10" rx="1.5" />
      </Svg>
    </Btn>
    <Btn w={28} on caret>
      <Svg size={14}>
        <path d="M7 1.5l5.500 3v5.500L7 13l-5.500-3V4.500zM1.500 4.500L7 7.500l5.500-3M7 7.500V13" />
      </Svg>
    </Btn>
    <Btn w={20}>
      <Svg size={14}>
        <path d="M2 2l10 10M12 2L2 12" stroke="#b5b5b5" />
      </Svg>
    </Btn>
    <Btn w={28} caret>
      <Svg size={13}>
        <circle cx="7" cy="7" r="5" />
        <path d="M7 7h4M7 7V3" />
      </Svg>
    </Btn>
    <Btn w={28} caret>
      <Svg size={13}>
        <path d="M2 12h10M2 12l8-9M7 12a5 5 0 0 0-2-4" />
      </Svg>
    </Btn>
    <Btn w={28} on caret>
      <Svg size={14}>
        <path d="M2 3h4M4 1v4" stroke="#2f7fd0" />
        <path d="M5 9h8" stroke="#2f7fd0" strokeWidth="3" />
      </Svg>
    </Btn>
    <Btn w={20}>
      <Svg size={14}>
        <rect x="2" y="1.5" width="10" height="11" />
        <rect x="4" y="4" width="6" height="6" stroke="#2f7fd0" />
      </Svg>
    </Btn>
    <Btn w={20}>
      <Svg size={14}>
        <rect x="2" y="1.5" width="4.5" height="11" stroke="#2f7fd0" />
        <rect x="8" y="7" width="4.5" height="5.5" />
      </Svg>
    </Btn>
    <Btn w={20}>
      <Svg size={14}>
        <path d="M2 12C2 6 6 2.500 12 2" />
        <circle cx="9" cy="9" r="1" fill="#555" />
      </Svg>
    </Btn>
    <Btn w={74}>
      <span className="flex-1 pl-[3px] whitespace-nowrap">1轴工作平面</span>
      <Caret className="mr-[5px]" />
    </Btn>
  </div>
);

const Canvas = () => (
  <div className="flex flex-1 flex-col">
    <div className="relative flex-1 overflow-hidden bg-[#1e2530]">
      <Scene />
      <ViewBar />
      <div className="absolute top-[79px] right-0 flex h-[15px] w-[14px] items-center overflow-hidden border border-[#555] bg-[#a8a8a8] pl-px text-[10px] text-[#444]">
        按
      </div>
    </div>
    <div className="flex h-[21px] shrink-0 items-center justify-center gap-[3px] bg-[#34383c] pl-[15px] text-[9.5px] text-[#e0e0e0]">
      <svg width="14" height="14" viewBox="0 0 14 14" fill="none" stroke="#e0e0e0">
        <path d="M13 1L8 6M8 2v4h4M1 13l5-5M6 12V8H2" />
      </svg>
      按鼠标左键指定第一个角点，或拾取构件图元
    </div>
    <BottomBar />
  </div>
);

const Taskbar = () => (
  <div className="flex h-full w-[50px] shrink-0 flex-col bg-[#1f2c33] text-white">
    <div className="flex h-[130px] flex-col items-center bg-[#1a2b3c] pt-[9px]">
      <svg width="14" height="14" viewBox="0 0 14 14" fill="#f2f2f2">
        <path d="M0 2l6-1v5.500H0zM7 .8L14 0v6.500H7zM0 7.500h6V13l-6-1zM7 7.500h7V14l-7-1z" />
      </svg>
      <svg width="15" height="15" viewBox="0 0 15 15" fill="none" stroke="#d5d8da" className="mt-[17px]">
        <circle cx="9" cy="6" r="4.500" />
        <path d="M5.500 9.500L1 14" />
      </svg>
      <span className="mt-[17px] size-[12px] rounded-full border-2 border-white" />
      <svg width="14" height="14" viewBox="0 0 14 14" fill="none" stroke="#c8ccce" className="mt-[19px]">
        <path d="M1 1h9M1 13h9M1 4h9v6H1zM13 1v12" />
      </svg>
    </div>
    <div className="relative flex h-[120px] flex-col items-center bg-[#2d2f31] pr-[3px] pt-[12px]">
      <svg width="18" height="16" viewBox="0 0 18 16">
        <path d="M1 1h6l2 2h8v12H1z" fill="#f3c64d" />
        <rect x="5" y="9" width="8" height="6" fill="#5b9bd5" />
      </svg>
      <div className="mt-[11px] flex size-[20px] items-center justify-center rounded-[3px] bg-[#2a6fb5] text-[8px] font-bold text-white">CAD</div>
      <div className="mt-[19px] flex size-[17px] items-center justify-center rounded-[2px] bg-[#d2472a] text-[10px] font-bold text-white">P</div>
      <div className="absolute top-[5px] right-0 h-[35px] w-[2px] bg-[#3f87d0]" />
      <div className="absolute top-[45px] right-0 h-[35px] w-[2px] bg-[#3f87d0]" />
      <div className="absolute top-[85px] right-0 h-[30px] w-[2px] bg-[#3f87d0]" />
    </div>
    <div className="relative flex h-[14px] shrink-0 items-center justify-between bg-[#f2f2f2] px-[3px] text-[#444]">
      <svg width="6" height="8" viewBox="0 0 6 8" fill="none" stroke="#222" strokeWidth="1.3">
        <path d="M5 1L1.500 4 5 7" />
      </svg>
      <span className="absolute left-[14px] h-full w-[13px] bg-[#cfcfcf]" />
      <svg width="6" height="8" viewBox="0 0 6 8" fill="none" stroke="#555" strokeWidth="1">
        <path d="M1 1l3.500 3L1 7" />
      </svg>
      <svg width="12" height="16" viewBox="0 0 12 16" className="absolute top-[3px] left-[10px]">
        <path d="M1 1v12l3-3 2 5 2-1-2-5h4z" fill="#fff" stroke="#222" strokeWidth=".8" />
      </svg>
    </div>
    <div className="flex flex-1 flex-col items-center bg-linear-to-b from-[#2d3a36] to-[#1b2530] pt-[5px] pr-[16px] text-[10px]">
      <svg width="8" height="12" viewBox="0 0 8 12" fill="none" stroke="#bbb" className="ml-[2px]">
        <path d="M6 1L1 6l5 5" />
      </svg>
      <span className="mt-[14px] h-[13px] w-[8px] rounded-t-[3px] bg-[#eee]" />
      <svg width="14" height="14" viewBox="0 0 14 14" fill="none" stroke="#ddd" className="mt-[14px]">
        <rect x="1" y="1" width="12" height="10" />
        <circle cx="11" cy="10" r="2.500" fill="#f39a1d" stroke="none" />
      </svg>
      <span className="mt-[12px] h-[6px] w-[12px] bg-[#eee]" />
      <svg width="12" height="12" viewBox="0 0 12 12" fill="none" stroke="#a9b0b2" className="mt-[20px]">
        <path d="M1 11a10 10 0 0 1 10-10M4 11a7 7 0 0 1 7-7M7 11a4 4 0 0 1 4-4" />
      </svg>
      <svg width="13" height="12" viewBox="0 0 13 12" fill="none" stroke="#ccc" className="mt-[12px]">
        <path d="M1 4h2l3-3v10L3 8H1zM8 4a3 3 0 0 1 0 4M10 2a6 6 0 0 1 0 8" />
      </svg>
      <svg width="12" height="12" viewBox="0 0 12 12" fill="none" stroke="#ccc" className="mt-[16px] ml-[16px]">
        <path d="M2 10l8-8M4 8l-2 2M8 2l2 2" />
      </svg>
      <div className="mt-[17px] -mr-[16px] flex w-full flex-col items-center">
        <span className="text-[12px] leading-[14px]">中</span>
        <span className="mt-[17px] leading-[14px] text-[#e8e8e8]">10:48</span>
        <span className="mt-px leading-[14px] text-[#e8e8e8]">星期五</span>
        <span className="mt-px whitespace-nowrap leading-[14px] text-[#e8e8e8]">2022/11/4</span>
        <svg width="16" height="16" viewBox="0 0 16 16" className="mt-[17px]">
          <path d="M1 1h12v9H6l-3 3v-3H1z" fill="#eee" />
          <circle cx="11" cy="12" r="4" fill="#2a3238" stroke="#ddd" />
          <text x="11" y="15" fontSize="8" fill="#fff" textAnchor="middle">1</text>
        </svg>
      </div>
    </div>
  </div>
);

const App = () => (
  <div className="flex h-[576px] w-[1024px] overflow-hidden bg-white font-['Liberation_Sans','Noto_Sans_CJK_SC',sans-serif] blur-[0.4px]">
    <div className="flex h-full w-[974px] shrink-0 flex-col">
      <Header />
      <Ribbon />
      <div className="flex h-[23px] shrink-0 items-center gap-[4px] bg-[#f3f3f3] pl-[2px] text-[10px]">
        <Combo w={78} text="第2层" />
        <Combo w={78} text="主构件" />
        <Combo w={77} text="斜腹杆" />
        <Combo w={78} text="XFG-1" />
      </div>
      <div className="flex flex-1 overflow-hidden">
        <div className="flex w-[327px] shrink-0 flex-col">
          <div className="flex h-[419px] shrink-0">
            <NavPanel />
            <div className="flex w-[3px] shrink-0 bg-white" />
            <div className="flex w-[214px] shrink-0 flex-col">
              <MemberPanel />
              <PositionPanel />
            </div>
            <div className="w-[3px] shrink-0 bg-[#3a3f44]" />
          </div>
          <StatusBar />
        </div>
        <Canvas />
      </div>
    </div>
    <Taskbar />
  </div>
);

export default App;
